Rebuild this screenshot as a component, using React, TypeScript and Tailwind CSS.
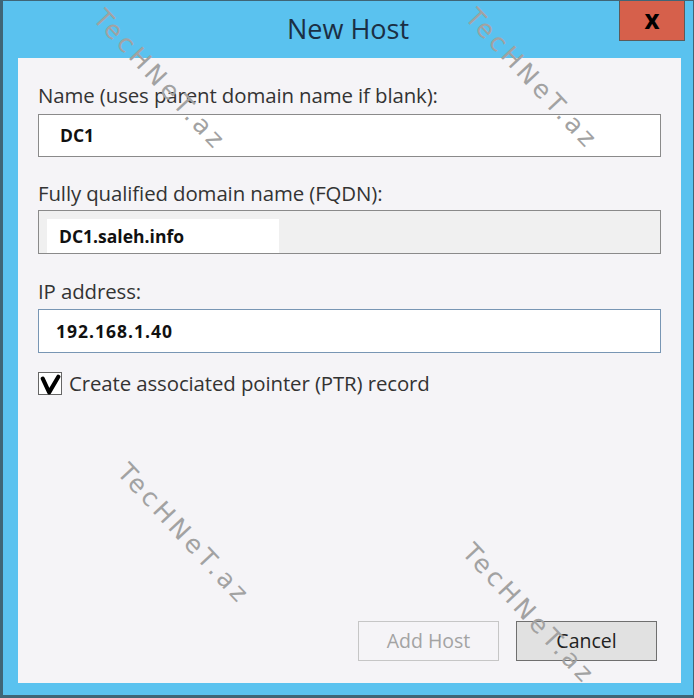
import React from 'react'

const FONT = { fontFamily: '"Open Sans", "Noto Sans", sans-serif' }

const MARKS = [
  'left-[157px] top-[79px]',
  'left-[529px] top-[78px]',
  'left-[181px] top-[533px]',
  'left-[526px] top-[613px]',
]

const Watermark: React.FC<{ pos: string }> = ({ pos }) => (
  <span
    className={`absolute ${pos} -translate-x-1/2 -translate-y-1/2 rotate-[47deg] whitespace-nowrap text-[25px] tracking-[4px] text-[#a2a2a2] pointer-events-none select-none`}
    style={{ fontFamily: '"DejaVu Sans", sans-serif' }}
  >
    TecHNeT.az
  </span>
)

const Field: React.FC<{ label: string; children: React.ReactNode }> = ({ label, children }) => (
  <div className="flex flex-col">
    <p className="text-[20.4px] leading-[24px] tracking-[-0.1px] text-[#333]">{label}</p>
    {children}
  </div>
)

export default function App() {
  return (
    <div
      className="relative w-[694px] h-[698px] bg-[#5ac2ef] border-l-[3px] border-t border-b-[3px] border-r border-[#3f6576] flex flex-col overflow-hidden"
      style={FONT}
    >
      {/* title bar */}
      <div className="relative h-[57px] shrink-0 flex items-start justify-center">
        <h1 className="mt-[10px] text-[27px] leading-[36px] text-[#1b2f44]">New Host</h1>
        <div className="absolute right-[8px] top-[-1px] w-[66px] h-[41px] bg-[#d6604b] border border-[#5b5b5b] flex items-center justify-center">
          <span className="text-[26px] font-bold leading-none text-black -mt-[4px]">x</span>
        </div>
      </div>

      {/* client area */}
      <div className="ml-[15px] mr-[12px] mb-[12px] flex-1 bg-[#f5f4f7] flex flex-col px-[20px] pt-[25px] pb-[22px]">
        <Field label="Name (uses parent domain name if blank):">
          <div className="mt-[7px] h-[43px] bg-white border border-[#8a8a8a] flex items-center pl-[21px]">
            <span className="text-[17.5px] font-bold text-[#111]">DC1</span>
          </div>
        </Field>

        <div className="mt-[24px]">
          <Field label="Fully qualified domain name (FQDN):">
            <div className="mt-[5px] h-[44px] bg-[#f0f0f0] border border-[#8a8a8a] flex items-end pl-[8px]">
              <div className="w-[232px] h-[34px] bg-white flex items-center pl-[12px]">
                <span className="text-[17.5px] font-bold text-[#111]">DC1.saleh.info</span>
              </div>
            </div>
          </Field>
        </div>

        <div className="mt-[25px]">
          <Field label="IP address:">
            <div className="mt-[6px] h-[44px] bg-white border border-[#7896b4] flex items-center pl-[17px]">
              <span className="text-[17.5px] font-bold tracking-[1px] text-[#111]">192.168.1.40</span>
            </div>
          </Field>
        </div>

        <label className="mt-[18px] flex items-center gap-[7px]">
          <span className="relative w-[24px] h-[23px] border border-[#666] bg-white shrink-0">
            <svg viewBox="0 0 24 24" className="absolute left-[1px] top-[1px] w-[22px] h-[22px]">
              <path d="M3 5 L10 20 L20 3" fill="none" stroke="#000" strokeWidth="4.5" strokeLinejoin="round" strokeLinecap="round" />
            </svg>
          </span>
          <span className="text-[20.4px] leading-[24px] tracking-[-0.1px] text-[#333]">Create associated pointer (PTR) record</span>
        </label>

        <div className="mt-auto flex justify-end gap-[17px] pr-[4px]">
          <button className="w-[141px] h-[40px] bg-[#f5f4f7] border border-[#c6c6c6] text-[19.5px] text-[#a3a3a3]">
            Add Host
          </button>
          <button className="w-[141px] h-[40px] bg-[#e1e1e1] border border-[#6f6f6f] text-[19.5px] text-[#222]">
            Cancel
          </button>
        </div>
      </div>

      {MARKS.map(p => (
        <Watermark key={p} pos={p} />
      ))}
    </div>
  )
}
